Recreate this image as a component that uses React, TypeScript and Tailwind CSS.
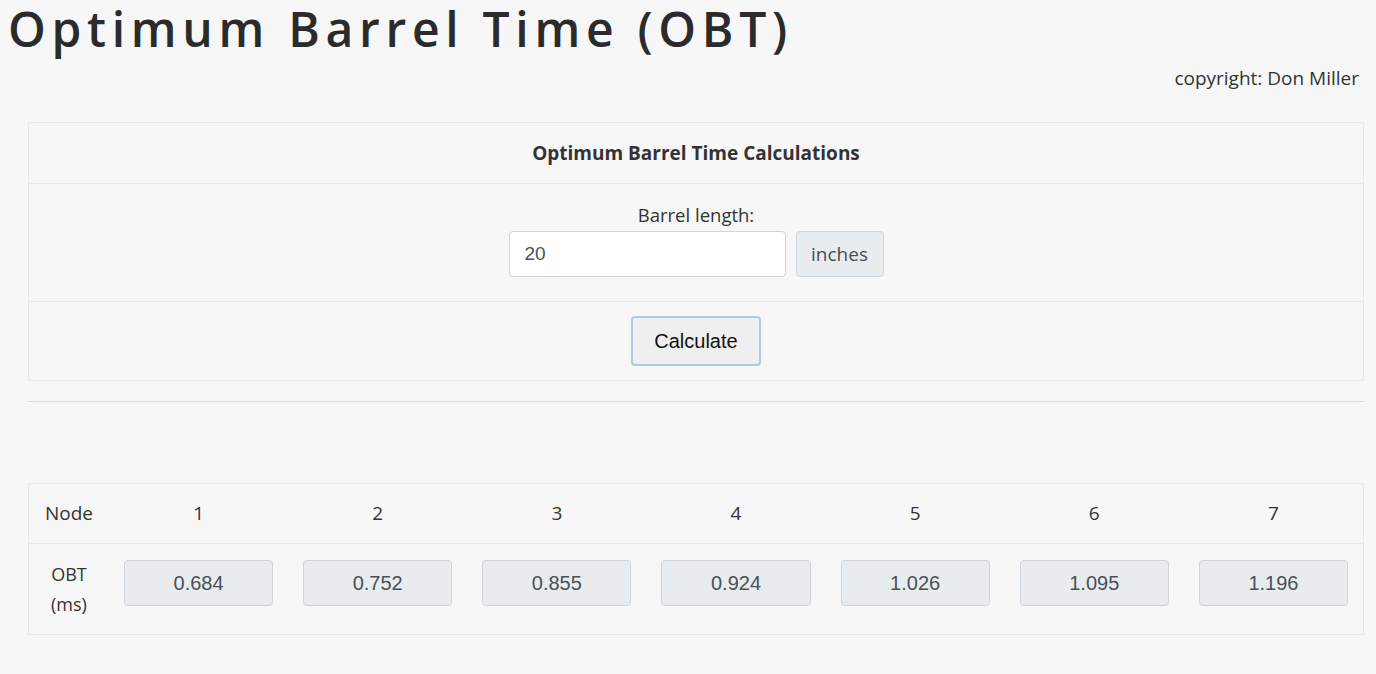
const nodes = [1, 2, 3, 4, 5, 6, 7];
const obt = ["0.684", "0.752", "0.855", "0.924", "1.026", "1.095", "1.196"];

export default function App() {
  return (
    <div
      className="min-h-[674px] bg-[#f7f7f7] text-[#333]"
      style={{ fontFamily: '"Open Sans", "Noto Sans", sans-serif' }}
    >
      {/* Title */}
      <h1 className="pl-[8px] text-[48px] font-semibold leading-[58px] tracking-[5.7px] text-[#2b2b2b]">
        Optimum Barrel Time (OBT)
      </h1>
      <div className="mt-[6px] pr-[17px] text-right text-[19px] leading-[28px] text-[#333]">
        copyright: Don Miller
      </div>

      <div className="pl-[28px] pr-[12px] pt-[30px]">
        {/* Calculation card */}
        <div className="border border-[#e8e8e8]">
          <div className="flex h-[61px] items-center justify-center border-b border-[#e8e8e8] text-[19px] font-bold">
            Optimum Barrel Time Calculations
          </div>
          <div className="flex h-[118px] flex-col items-center border-b border-[#e8e8e8] pt-[18px]">
            <label className="text-[18.5px] leading-[26px] text-[#333]">Barrel length:</label>
            <div className="mt-[3px] flex items-center gap-[10px]">
              <input
                defaultValue="20"
                className="h-[46px] w-[277px] rounded-[4px] border border-[#ced4da] bg-white px-[15px] text-[19px] text-[#495057] outline-none"
                style={{ fontFamily: '"Liberation Sans", Arial, sans-serif' }}
              />
              <span className="flex h-[46px] w-[88px] items-center justify-center rounded-[4px] border border-[#ced4da] bg-[#e9ecef] text-[19px] text-[#495057]">
                inches
              </span>
            </div>
          </div>
          <div className="flex h-[78px] items-center justify-center">
            <button
              className="h-[50px] w-[130px] rounded-[4px] border-2 border-[#a9cbec] bg-[#efefef] text-[20px] text-[#111]"
              style={{ fontFamily: '"Liberation Sans", Arial, sans-serif' }}
            >
              Calculate
            </button>
          </div>
        </div>

        <hr className="mt-[20px] border-t border-[#dcdcdc]" />

        {/* Results table */}
        <div className="mt-[81px] border border-[#e8e8e8]">
          <div className="grid h-[60px] grid-cols-[80px_repeat(7,1fr)] items-center border-b border-[#e8e8e8] text-[19px]">
            <div className="text-center">Node</div>
            {nodes.map((n) => (
              <div key={n} className="text-center">
                {n}
              </div>
            ))}
          </div>
          <div className="grid h-[90px] grid-cols-[80px_repeat(7,1fr)] items-start text-[18px]">
            <div className="pt-[15px] text-center leading-[30px]">
              OBT
              <br />
              (ms)
            </div>
            {obt.map((v) => (
              <div key={v} className="px-[15px] pt-[16px]">
                <div
                  className="flex h-[46px] items-center justify-center rounded-[4px] border border-[#ced4da] bg-[#e9ecef] text-[20px] text-[#495057]"
                  style={{ fontFamily: '"Liberation Sans", Arial, sans-serif' }}
                >
                  {v}
                </div>
              </div>
            ))}
          </div>
        </div>
      </div>
    </div>
  );
}
